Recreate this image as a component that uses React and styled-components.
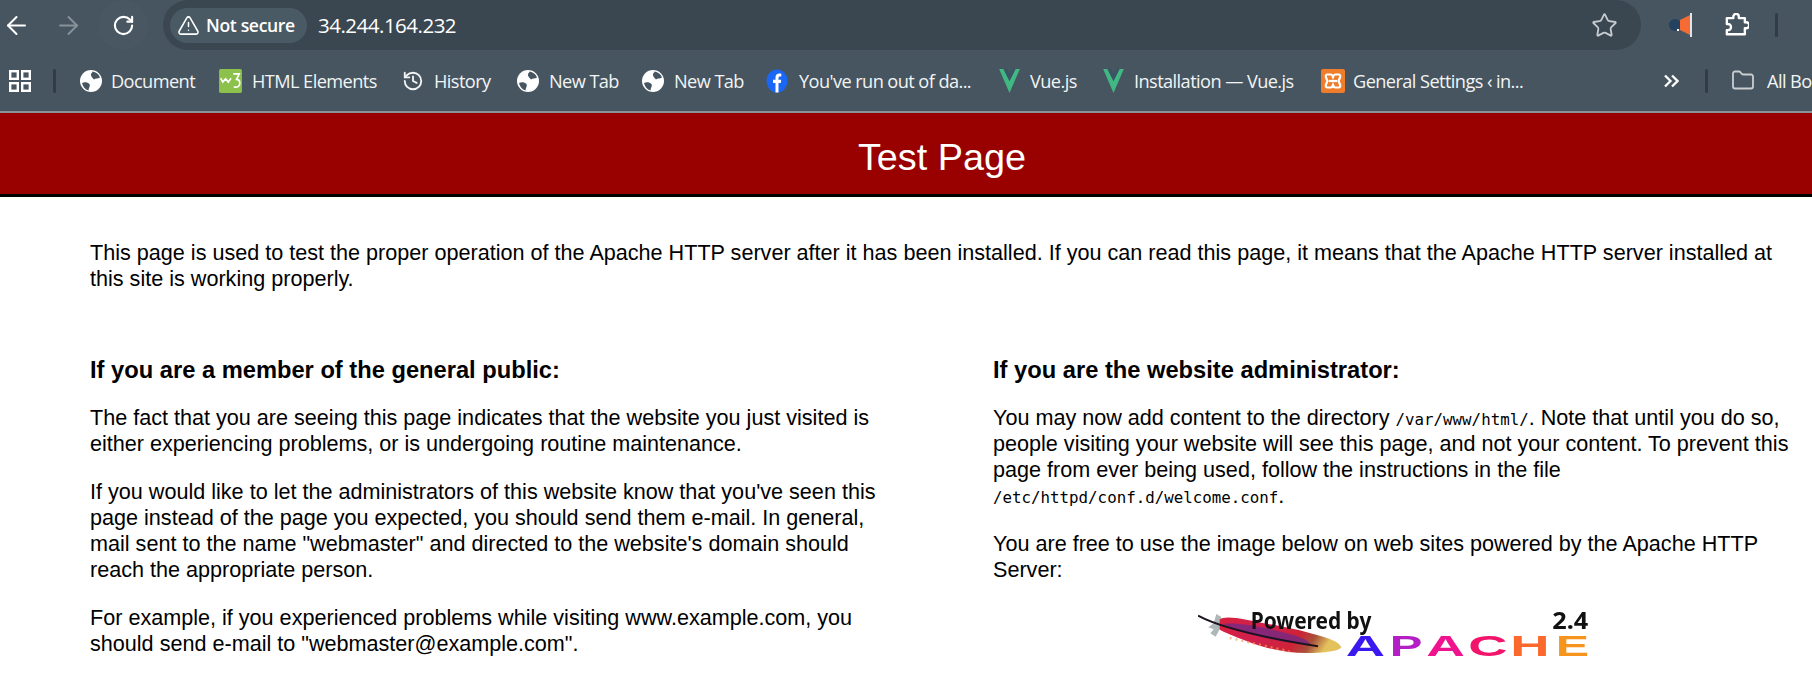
import React from "react";
import styled, { createGlobalStyle } from "styled-components";
import {
  ArrowLeft,
  ArrowRight,
  RotateCw,
  TriangleAlert,
  Star,
  History,
  Folder,
} from "lucide-react";

const GlobalStyle = createGlobalStyle`
  html, body {
    margin: 0;
    padding: 0;
    overflow: hidden;
    background: #fff;
  }
`;

// the captured page was wider than the crop, so the title centres past the middle
const Frame = styled.div`
  width: 1884px;
  height: 693px;
  overflow: hidden;
`;

const Toolbar = styled.div`
  display: flex;
  align-items: center;
  height: 50px;
  background: #46555f;
  color: #fff;
`;

const NavButton = styled.div`
  flex: none;
  display: flex;
  align-items: center;
  justify-content: center;
  width: ${(p) => p.$w}px;
  height: 50px;
  margin-left: ${(p) => p.$ml || 0}px;
  border-radius: 50%;
  color: ${(p) => (p.$off ? "#87929a" : "#fff")};
  background: ${(p) => (p.$hover ? "#485761" : "transparent")};
`;

const Omnibox = styled.div`
  flex: none;
  display: flex;
  align-items: center;
  width: 1478px;
  height: 50px;
  margin-left: 15px;
  padding: 0 23px 0 7px;
  box-sizing: border-box;
  border-radius: 25px;
  background: #3b4750;
`;

const SecurityChip = styled.div`
  display: flex;
  align-items: center;
  gap: 6px;
  width: 137px;
  height: 35px;
  padding-left: 7px;
  box-sizing: border-box;
  border-radius: 18px;
  background: #4a5a64;
  font: 600 17.6px "Open Sans", sans-serif;
  letter-spacing: -0.35px;
  white-space: nowrap;
`;

const Url = styled.div`
  flex: 1;
  margin-left: 11px;
  font: 400 20.5px "Open Sans", sans-serif;
  letter-spacing: -0.5px;
`;

const ExtIcon = styled.div`
  flex: none;
  display: flex;
  margin-left: ${(p) => p.$ml}px;
`;

const Divider = styled.div`
  flex: none;
  width: 3px;
  height: 24px;
  margin-left: ${(p) => p.$ml}px;
  border-radius: 2px;
  background: #313c44;
`;

const BookmarkBar = styled.div`
  display: flex;
  align-items: center;
  height: 61px;
  padding-left: 9px;
  background: #46555f;
  border-bottom: 2px solid #8b9398;
  color: #f2f4f5;
`;

const Bookmark = styled.div`
  flex: none;
  display: flex;
  align-items: center;
  width: ${(p) => p.$w}px;
  margin-left: ${(p) => p.$ml || 0}px;
  font: 400 18.2px "Open Sans", sans-serif;
  letter-spacing: -0.58px;
  white-space: nowrap;
`;

const Favicon = styled.span`
  flex: none;
  display: flex;
  align-items: center;
  justify-content: center;
  width: ${(p) => p.$w}px;
  margin-right: ${(p) => p.$gap}px;
`;

const Banner = styled.header`
  display: flex;
  align-items: center;
  justify-content: center;
  height: 73px;
  padding-top: 8px;
  background: #990000;
  border-bottom: 3px solid #000;
`;

const Title = styled.h1`
  margin: 0;
  color: #fff;
  font: 400 37.8px "Liberation Sans", Arial, sans-serif;
`;

const Content = styled.main`
  padding: 43px 90px 0;
  color: #000;
  font: 400 21.6px/26px "Liberation Sans", Arial, sans-serif;
`;

const Intro = styled.p`
  margin: 0 0 62.5px;
`;

const Columns = styled.div`
  display: grid;
  grid-template-columns: 810px 810px;
  column-gap: 93px;
`;

const Heading = styled.h2`
  margin: 0 0 20px;
  font: 700 23.7px/30px "Liberation Sans", Arial, sans-serif;
`;

const Para = styled.p`
  margin: 0 0 22px;
`;

const Code = styled.code`
  font: 400 15.8px "DejaVu Sans Mono", monospace;
`;

const LogoWrap = styled.div`
  margin: 25px 0 0 205px;
  filter: blur(0.4px);
`;

const GlobeIcon = () => (
  <svg width="22" height="22" viewBox="0 0 22 22">
    <circle cx="11" cy="11" r="11" fill="#fff" />
    <path d="M12.500 1.500C16 2 19 4.500 20 7.500c-2 1.500-4.500.5-6 2-1.500-1.500-3.500-3.500-3-5.500.5-1 1.500-1.500 1.500-2.500z" fill="#46555f" />
    <path d="M2 13c2.500-1.500 5.500-1 7.500 1 1 2-.5 3-1 6.500C5 19.500 2.800 16.500 2 13z" fill="#46555f" />
  </svg>
);

const AppsIcon = () => (
  <svg width="22" height="22" viewBox="0 0 22 22" fill="none" stroke="#fff" strokeWidth="2.4">
    <rect x="1.2" y="1.2" width="7.6" height="7.6" />
    <rect x="13.2" y="1.2" width="7.6" height="7.6" />
    <rect x="1.2" y="13.2" width="7.6" height="7.6" />
    <rect x="13.2" y="13.2" width="7.6" height="7.6" />
  </svg>
);

const W3Icon = () => (
  <svg width="25" height="24" viewBox="0 0 21 22">
    <rect width="21" height="22" rx="1.5" fill="#8cc14c" />
    <path d="M1.500 8.500l2 3.500 2.500-3 2.500 3 2.500-3.500" fill="none" stroke="#fff" strokeWidth="1.5" />
    <path d="M13 4.500h5.500L16 9.500c2.500 0 3 1.500 3 3.500 0 2.500-1.500 4-5.500 3.500" fill="none" stroke="#fff" strokeWidth="1.5" />
  </svg>
);

const FacebookIcon = () => (
  <svg width="23" height="24" viewBox="0 0 22 24">
    <ellipse cx="11" cy="12" rx="10.500" ry="11.500" fill="#1a66f5" />
    <path
      d="M9.500 23.500V14H7v-3.200h2.500V8.600c0-2.700 1.400-4.100 3.900-4.100.9 0 1.700.1 1.900.2v2.900h-1.400c-1.100 0-1.400.6-1.400 1.500v1.700h2.700l-.4 3.200h-2.300v9.500z"
      fill="#fff"
    />
  </svg>
);

const VueIcon = () => (
  <svg width="25" height="24" viewBox="0 0 19 22">
    <path d="M0 0h4l5.500 11L15 0h4L9.500 22z" fill="#41b883" />
    <path d="M4 0h3.200l2.300 4.600L11.800 0H15L9.500 11z" fill="#3c5364" />
  </svg>
);

const XamppIcon = () => (
  <svg width="24" height="24" viewBox="0 0 24 24">
    <rect width="24" height="24" rx="2" fill="#ef7d2b" />
    <path
      d="M6 5.500h4c1 0 1.500 1.200 2 2.500.5-1.300 1-2.500 2-2.500h4c1.200 0 1.500 1.500 1 3l-1.500 3.500 1.500 3.500c.5 1.500.2 3-1 3h-4c-1 0-1.500-1.200-2-2.500-.5 1.300-1 2.500-2 2.500H6c-1.200 0-1.500-1.500-1-3L6.500 12 5 8.500c-.5-1.500-.2-3 1-3z"
      fill="none"
      stroke="#fff"
      strokeWidth="2.200"
    />
    <path d="M8 12h8" stroke="#fff" strokeWidth="2.200" />
  </svg>
);

const MegaphoneIcon = () => (
  <svg width="24" height="26" viewBox="0 0 24 26">
    <circle cx="6" cy="13" r="6" fill="#24415f" />
    <path d="M11 8l10-5v20l-10-5z" fill="#f56a35" />
    <rect x="21" y="1" width="2" height="24" fill="#dfe4e8" />
    <rect x="8" y="17" width="2" height="2" fill="#fff" />
  </svg>
);

const PuzzleIcon = () => (
  <svg width="24" height="24" viewBox="0 0 26 26" fill="none" stroke="#fff" strokeWidth="2.600" strokeLinejoin="round">
    <path d="M2 5.500h7V4a3 3 0 0 1 6 0v1.500h6.500V10H23a3 3 0 0 1 0 6.500h-1.500V23H2v-4.500c3 .5 4.500-1 4.500-3.200S5 11.500 2 12z" />
  </svg>
);

const MoreIcon = () => (
  <svg width="15" height="14" viewBox="0 0 15 14" fill="none" stroke="#fff" strokeWidth="2.300">
    <path d="M1 1.500L6.500 7 1 12.500M8 1.500L13.500 7 8 12.500" />
  </svg>
);

const apacheLetters = [
  { ch: "A", x: 528, w: 118, fill: "#3a18f0" },
  { ch: "P", x: 660, w: 98, fill: "#b31fc4" },
  { ch: "A", x: 770, w: 116, fill: "#f0138e" },
  { ch: "C", x: 896, w: 118, fill: "#f2146b" },
  { ch: "H", x: 1022, w: 118, fill: "#fb6a2c" },
  { ch: "E", x: 1158, w: 100, fill: "#f7941d" },
];

const ApacheLogo = () => (
  <svg width="400" height="51" viewBox="85 60 1200 153" fontFamily="'Liberation Sans', Arial, sans-serif">
    <defs>
      <linearGradient id="feather" x1="0" y1="0" x2="1" y2="0.2">
        <stop offset="0" stopColor="#d8213f" />
        <stop offset="0.4" stopColor="#d1204f" />
        <stop offset="0.72" stopColor="#cf2236" />
        <stop offset="0.86" stopColor="#a8503a" />
        <stop offset="1" stopColor="#e3c25d" />
      </linearGradient>
    </defs>
    <path d="M140 78l14 8 4 22-8 16-12 22-16-10 10-12-16-6 16-12z" fill="#aeb8b8" />
    <path
      d="M150 95c8-10 40-8 80 0 60 12 130 24 190 40 45 12 85 22 95 42-4 12-50 18-105 18-60 0-125-14-180-36-34-14-70-28-80-34z"
      fill="url(#feather)"
    />
    <path d="M160 108c40-6 120 8 200 30 30 8 50 16 62 30-60 0-160-18-262-60z" fill="#6e2a8a" opacity="0.75" />
    <path d="M180 150l180 40" fill="none" stroke="#f0a050" strokeWidth="7" strokeDasharray="6 12" opacity="0.7" />
    <path d="M85 83c60 32 170 62 360 92" fill="none" stroke="#1b1320" strokeWidth="6" />
    <text x="243" y="123" fontFamily="'Noto Sans', sans-serif" fontSize="68" fontWeight="700" fill="#111" textLength="362" lengthAdjust="spacingAndGlyphs">
      Powered by
    </text>
    <text x="1148" y="123" fontFamily="'Noto Sans', sans-serif" fontSize="68" fontWeight="700" fill="#111" textLength="108" lengthAdjust="spacingAndGlyphs">
      2.4
    </text>
    <g fontSize="88" fontWeight="700">
      {apacheLetters.map((l) => (
        <text key={l.x} x={l.x} y="203" fill={l.fill} textLength={l.w} lengthAdjust="spacingAndGlyphs">
          {l.ch}
        </text>
      ))}
    </g>
  </svg>
);

export default function App() {
  return (
    <Frame>
      <GlobalStyle />
      <Toolbar>
        <NavButton $w={32}>
          <ArrowLeft size={29} strokeWidth={1.7} />
        </NavButton>
        <NavButton $w={32} $ml={20} $off>
          <ArrowRight size={29} strokeWidth={1.6} />
        </NavButton>
        <NavButton $w={50} $ml={14} $hover>
          <RotateCw size={23} strokeWidth={2.2} />
        </NavButton>
        <Omnibox>
          <SecurityChip>
            <TriangleAlert size={23} strokeWidth={1.6} />
            Not secure
          </SecurityChip>
          <Url>34.244.164.232</Url>
          <Star size={27} strokeWidth={1.6} color="#c5cbcf" />
        </Omnibox>
        <ExtIcon $ml={28}>
          <MegaphoneIcon />
        </ExtIcon>
        <ExtIcon $ml={32}>
          <PuzzleIcon />
        </ExtIcon>
        <Divider $ml={26} />
      </Toolbar>
      <BookmarkBar>
        <AppsIcon />
        <Divider $ml={22} />
        <Bookmark $w={139} $ml={23}>
          <Favicon $w={23} $gap={9}><GlobeIcon /></Favicon>
          Document
        </Bookmark>
        <Bookmark $w={184}>
          <Favicon $w={25} $gap={9}><W3Icon /></Favicon>
          HTML Elements
        </Bookmark>
        <Bookmark $w={115}>
          <Favicon $w={22} $gap={10}><History size={24} strokeWidth={2} /></Favicon>
          History
        </Bookmark>
        <Bookmark $w={125}>
          <Favicon $w={22} $gap={10}><GlobeIcon /></Favicon>
          New Tab
        </Bookmark>
        <Bookmark $w={124}>
          <Favicon $w={22} $gap={10}><GlobeIcon /></Favicon>
          New Tab
        </Bookmark>
        <Bookmark $w={231}>
          <Favicon $w={22} $gap={11}><FacebookIcon /></Favicon>
          You've run out of da...
        </Bookmark>
        <Bookmark $w={104}>
          <Favicon $w={25} $gap={8}><VueIcon /></Favicon>
          Vue.js
        </Bookmark>
        <Bookmark $w={220}>
          <Favicon $w={25} $gap={8}><VueIcon /></Favicon>
          Installation — Vue.js
        </Bookmark>
        <Bookmark $w={342}>
          <Favicon $w={24} $gap={8}><XamppIcon /></Favicon>
          General Settings ‹ in...
        </Bookmark>
        <Favicon $w={16} $gap={0}><MoreIcon /></Favicon>
        <Divider $ml={26} />
        <Bookmark $w={150} $ml={23}>
          <Favicon $w={24} $gap={12}><Folder size={27} strokeWidth={1.8} color="#c9ced1" /></Favicon>
          All Bookmarks
        </Bookmark>
      </BookmarkBar>
      <Banner>
        <Title>Test Page</Title>
      </Banner>
      <Content>
        <Intro>
          This page is used to test the proper operation of the Apache HTTP server after it has been installed. If you can read this page, it means that the Apache HTTP server installed at this site is working properly.
        </Intro>
        <Columns>
          <section>
            <Heading>If you are a member of the general public:</Heading>
            <Para>
              The fact that you are seeing this page indicates that the website you just visited is either experiencing problems, or is undergoing routine maintenance.
            </Para>
            <Para>
              If you would like to let the administrators of this website know that you've seen this page instead of the page you expected, you should send them e-mail. In general, mail sent to the name "webmaster" and directed to the website's domain should reach the appropriate person.
            </Para>
            <Para>
              For example, if you experienced problems while visiting www.example.com, you should send e-mail to "webmaster@example.com".
            </Para>
          </section>
          <section>
            <Heading>If you are the website administrator:</Heading>
            <Para>
              You may now add content to the directory <Code>/var/www/html/</Code>. Note that until you do so, people visiting your website will see this page, and not your content. To prevent this page from ever being used, follow the instructions in the file <Code>/etc/httpd/conf.d/welcome.conf</Code>.
            </Para>
            <Para>
              You are free to use the image below on web sites powered by the Apache HTTP Server:
            </Para>
            <LogoWrap>
              <ApacheLogo />
            </LogoWrap>
          </section>
        </Columns>
      </Content>
    </Frame>
  );
}
